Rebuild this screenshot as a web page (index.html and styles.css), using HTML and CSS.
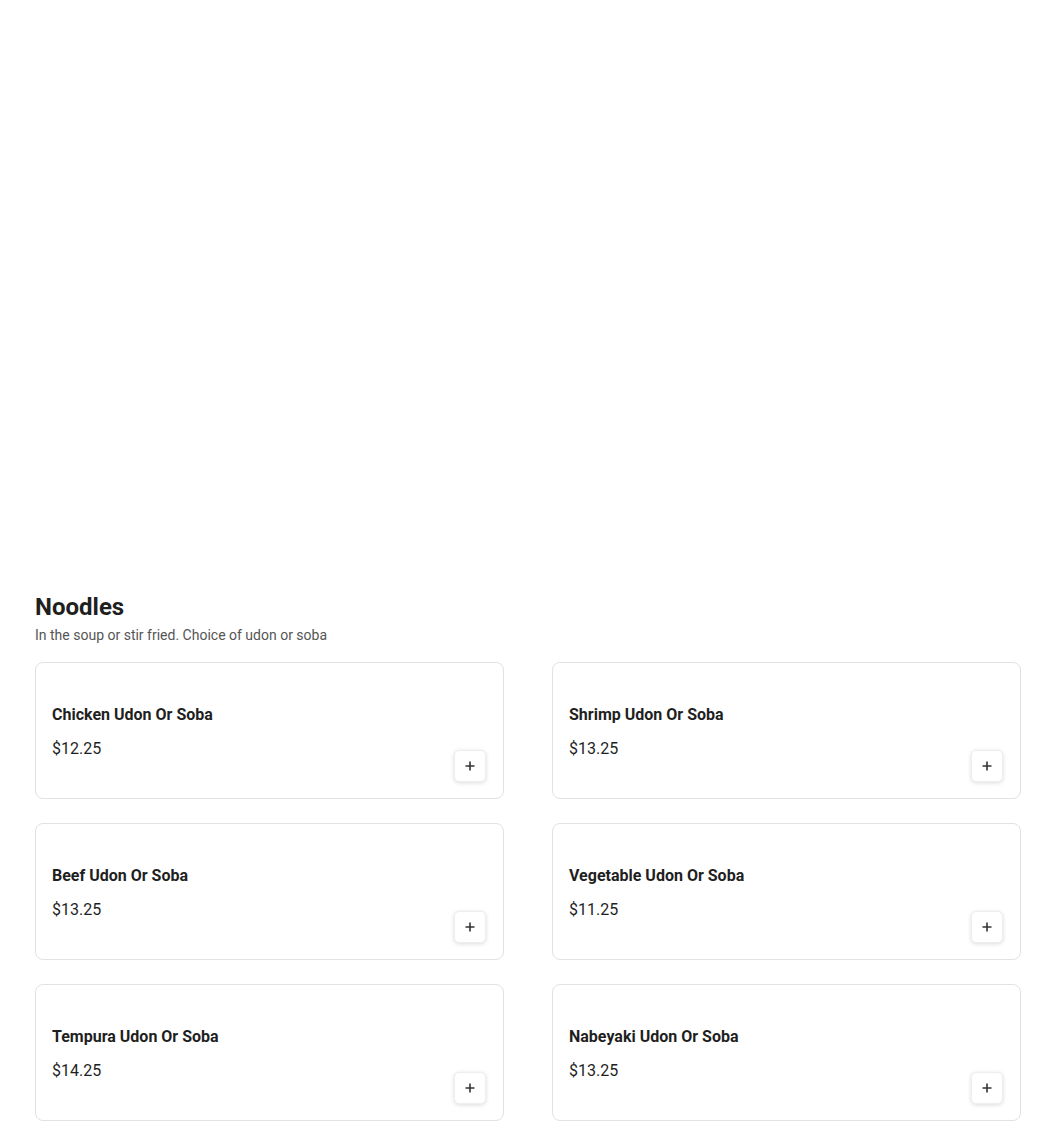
FILE: index.html
```html
<!DOCTYPE html>
<html lang="en">
<head>
    <meta charset="UTF-8">
    <meta name="viewport" content="width=device-width, initial-scale=1.0">
    <title>Menu - Noodles</title>
    <link rel="stylesheet" href="styles.css">
</head>
<body>
    <div class="page">
        <div class="hero"></div>

        <section class="menu-section">
            <h2 class="section-title">Noodles</h2>
            <p class="section-desc">In the soup or stir fried. Choice of udon or soba</p>

            <div class="item-grid">
                <div class="item-card">
                    <div class="item-info">
                        <h3 class="item-name">Chicken Udon Or Soba</h3>
                        <span class="item-price">$12.25</span>
                    </div>
                    <button class="add-btn" aria-label="Add">
                        <svg width="12" height="12" viewBox="0 0 12 12"><path d="M6 1.5v9M1.5 6h9" stroke="#333" stroke-width="1.6"/></svg>
                    </button>
                </div>
                <div class="item-card">
                    <div class="item-info">
                        <h3 class="item-name">Shrimp Udon Or Soba</h3>
                        <span class="item-price">$13.25</span>
                    </div>
                    <button class="add-btn" aria-label="Add">
                        <svg width="12" height="12" viewBox="0 0 12 12"><path d="M6 1.5v9M1.5 6h9" stroke="#333" stroke-width="1.6"/></svg>
                    </button>
                </div>
                <div class="item-card">
                    <div class="item-info">
                        <h3 class="item-name">Beef Udon Or Soba</h3>
                        <span class="item-price">$13.25</span>
                    </div>
                    <button class="add-btn" aria-label="Add">
                        <svg width="12" height="12" viewBox="0 0 12 12"><path d="M6 1.5v9M1.5 6h9" stroke="#333" stroke-width="1.6"/></svg>
                    </button>
                </div>
                <div class="item-card">
                    <div class="item-info">
                        <h3 class="item-name">Vegetable Udon Or Soba</h3>
                        <span class="item-price">$11.25</span>
                    </div>
                    <button class="add-btn" aria-label="Add">
                        <svg width="12" height="12" viewBox="0 0 12 12"><path d="M6 1.5v9M1.5 6h9" stroke="#333" stroke-width="1.6"/></svg>
                    </button>
                </div>
                <div class="item-card">
                    <div class="item-info">
                        <h3 class="item-name">Tempura Udon Or Soba</h3>
                        <span class="item-price">$14.25</span>
                    </div>
                    <button class="add-btn" aria-label="Add">
                        <svg width="12" height="12" viewBox="0 0 12 12"><path d="M6 1.5v9M1.5 6h9" stroke="#333" stroke-width="1.6"/></svg>
                    </button>
                </div>
                <div class="item-card">
                    <div class="item-info">
                        <h3 class="item-name">Nabeyaki Udon Or Soba</h3>
                        <span class="item-price">$13.25</span>
                    </div>
                    <button class="add-btn" aria-label="Add">
                        <svg width="12" height="12" viewBox="0 0 12 12"><path d="M6 1.5v9M1.5 6h9" stroke="#333" stroke-width="1.6"/></svg>
                    </button>
                </div>
            </div>
        </section>
    </div>
</body>
</html>
```

FILE: styles.css
```css
:root {
    --text: #1f1f1f;
    --muted: #555555;
    --border: #e2e2e2;
    --white: #ffffff;
}

* {
    margin: 0;
    padding: 0;
    box-sizing: border-box;
    font-family: Roboto, 'Liberation Sans', sans-serif;
}

body {
    background-color: var(--white);
    color: var(--text);
}

.page {
    width: 986px;
    margin-left: 35px;
}

.hero {
    height: 593px;
}

.section-title {
    font-size: 24px;
    line-height: 28px;
    font-weight: 700;
    color: var(--text);
}

.section-desc {
    margin-top: 4px;
    font-size: 14px;
    line-height: 20px;
    color: var(--muted);
}

.item-grid {
    display: grid;
    grid-template-columns: 1fr 1fr;
    column-gap: 48px;
    row-gap: 24px;
    margin-top: 17px;
    padding-bottom: 18px;
}

.item-card {
    display: flex;
    justify-content: space-between;
    border: 1px solid var(--border);
    border-radius: 8px;
    padding: 40px 17px 16px 16px;
    background-color: var(--white);
}

.item-info {
    display: flex;
    flex-direction: column;
    gap: 10px;
    padding-bottom: 21px;
}

.item-name {
    font-size: 16px;
    line-height: 24px;
    font-weight: 700;
    color: var(--text);
}

.item-price {
    font-size: 16px;
    line-height: 24px;
    color: var(--text);
}

.add-btn {
    align-self: flex-end;
    width: 32px;
    height: 32px;
    display: flex;
    align-items: center;
    justify-content: center;
    border: 1px solid #eeeeee;
    border-radius: 5px;
    background-color: var(--white);
    box-shadow: 0 1px 4px rgba(0, 0, 0, 0.14);
    cursor: pointer;
}
```
